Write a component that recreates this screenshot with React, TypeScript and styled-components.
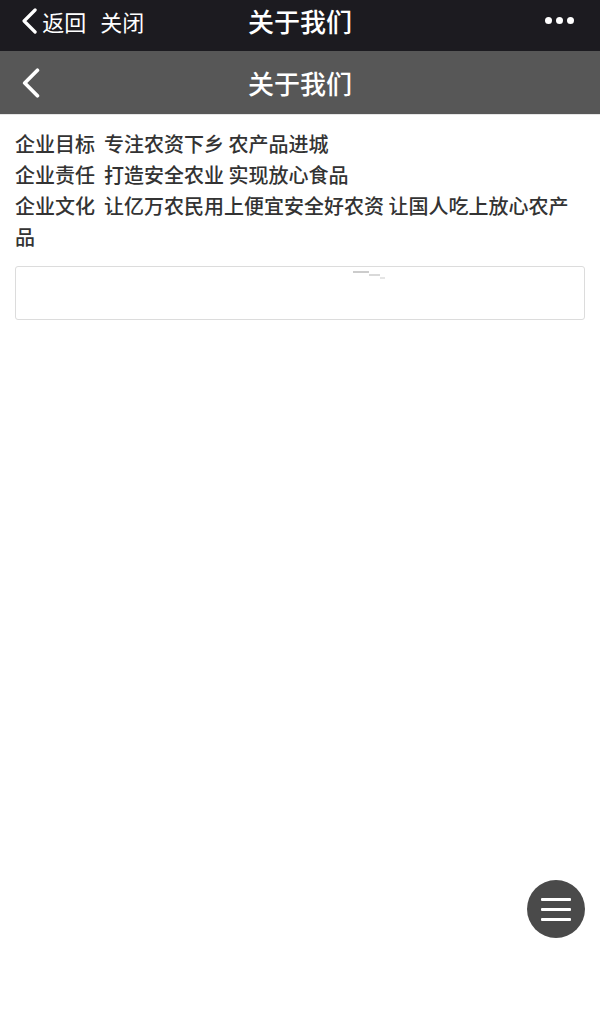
import * as React from 'react'
import styled, { createGlobalStyle } from 'styled-components'

const GlobalStyle = createGlobalStyle`
  html, body {
    margin: 0;
    padding: 0;
    background: #fff;
    font-family: "Noto Sans CJK SC", "Liberation Sans", sans-serif;
  }
`

const Chevron: React.FC<{ size?: number }> = ({ size = 26 }) => (
  <svg width={size * 0.7} height={size} viewBox="0 0 18 26" fill="none">
    <path
      d="M15 2 L4 13 L15 24"
      stroke="#fff"
      strokeWidth="3.2"
      strokeLinecap="round"
      strokeLinejoin="round"
    />
  </svg>
)

const App: React.FC = () => {
  return (
    <Page>
      <GlobalStyle />
      <TopBar>
        <TopLeft>
          <Chevron size={26} />
          <TopLink>返回</TopLink>
          <TopLink className="gap">关闭</TopLink>
        </TopLeft>
        <TopTitle>关于我们</TopTitle>
        <Dots>
          <Dot />
          <Dot />
          <Dot />
        </Dots>
      </TopBar>
      <Header>
        <BackButton>
          <Chevron size={30} />
        </BackButton>
        <HeaderTitle>关于我们</HeaderTitle>
      </Header>
      <Content>
        <Intro>
          <Line>企业目标&nbsp; 专注农资下乡 农产品进城</Line>
          <Line>企业责任&nbsp; 打造安全农业 实现放心食品</Line>
          <Line>企业文化&nbsp; 让亿万农民用上便宜安全好农资 让国人吃上放心农产品</Line>
        </Intro>
        <Frame>
          <Loader viewBox="0 0 36 12" width="36" height="12">
            <path d="M0 1 H16" stroke="#bbb" strokeWidth="1.5" />
            <path d="M16 4 H27" stroke="#ccc" strokeWidth="1.5" />
            <path d="M27 7 H32" stroke="#ddd" strokeWidth="1.5" />
          </Loader>
        </Frame>
      </Content>
      <MenuFab>
        <Bar />
        <Bar />
        <Bar />
      </MenuFab>
    </Page>
  )
}

const Page = styled.div`
  position: relative;
  width: 600px;
  min-height: 1025px;
  background: #fff;
`

const TopBar = styled.div`
  position: relative;
  height: 51px;
  box-sizing: border-box;
  background: #1c1b20;
  display: flex;
  align-items: center;
  justify-content: space-between;
  padding: 0 26px 10px 20px;
  color: #fff;
`

const TopLeft = styled.div`
  display: flex;
  align-items: center;
  gap: 4px;
`

const TopLink = styled.span`
  font-size: 22px;
  color: #fff;
  line-height: 1;
  &.gap {
    margin-left: 10px;
  }
`

const TopTitle = styled.div`
  position: absolute;
  left: 0;
  right: 0;
  top: 0;
  bottom: 10px;
  display: flex;
  align-items: center;
  justify-content: center;
  font-size: 26px;
  font-weight: 500;
  pointer-events: none;
`

const Dots = styled.div`
  display: flex;
  gap: 4px;
`

const Dot = styled.span`
  width: 7px;
  height: 7px;
  border-radius: 50%;
  background: #fff;
`

const Header = styled.div`
  position: relative;
  height: 63px;
  background: #575757;
  border-bottom: 1px solid #e5e5e5;
  display: flex;
  align-items: center;
  padding: 0 20px;
`

const BackButton = styled.div`
  display: flex;
  align-items: center;
`

const HeaderTitle = styled.div`
  position: absolute;
  left: 0;
  right: 0;
  text-align: center;
  font-size: 26px;
  font-weight: 500;
  color: #fff;
`

const Content = styled.div`
  padding: 13px 15px 0;
`

const Intro = styled.div`
  font-size: 20px;
  line-height: 31px;
  color: #333;
  font-weight: 500;
`

const Line = styled.div``

const Frame = styled.div`
  position: relative;
  margin-top: 14px;
  height: 52px;
  border: 1px solid #dcdcdc;
  border-radius: 3px;
  background: #fff;
`

const Loader = styled.svg`
  position: absolute;
  left: 337px;
  top: 4px;
`

const MenuFab = styled.div`
  position: absolute;
  left: 527px;
  top: 880px;
  width: 58px;
  height: 58px;
  border-radius: 50%;
  background: #4a4a4a;
  display: flex;
  flex-direction: column;
  align-items: center;
  justify-content: center;
  gap: 7px;
`

const Bar = styled.span`
  width: 30px;
  height: 3px;
  background: #fff;
  border-radius: 1px;
`

export default App
